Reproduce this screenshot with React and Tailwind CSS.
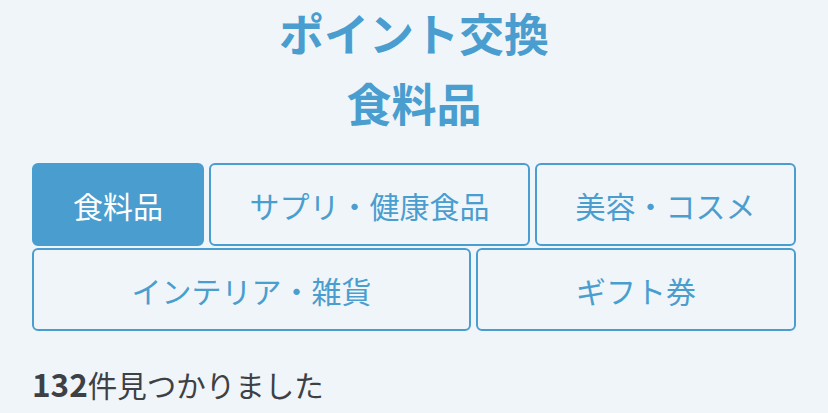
const categories = [
  [
    { label: "食料品", width: "w-[172px]", active: true },
    { label: "サプリ・健康食品", width: "w-[321px]" },
    { label: "美容・コスメ", width: "w-[261px]" },
  ],
  [
    { label: "インテリア・雑貨", width: "w-[439px]" },
    { label: "ギフト券", width: "w-[320px]" },
  ],
];

export default function App() {
  return (
    <div
      className="min-h-[413px] bg-[#f0f5f9] px-8 overflow-hidden"
      style={{ fontFamily: '"Noto Sans CJK JP", "Noto Sans", sans-serif' }}
    >
      {/* タイトル */}
      <h1 className="text-center text-[45px] font-bold text-[#4a9ecf]">
        <span className="block leading-[66px]">ポイント交換</span>
        <span className="block leading-[74px]">食料品</span>
      </h1>

      {/* カテゴリ */}
      <div className="mt-[23px] flex flex-col gap-[2px]">
        {categories.map((row, i) => (
          <div key={i} className="flex gap-[5px]">
            {row.map((c) => (
              <button
                key={c.label}
                className={`${c.width} h-[83px] rounded-md border-2 border-[#4a9ecf] text-[30px] leading-none ${
                  c.active ? "bg-[#4a9ecf] text-white" : "text-[#4a9ecf]"
                }`}
              >
                {c.label}
              </button>
            ))}
          </div>
        ))}
      </div>

      {/* 件数 */}
      <p className="mt-[32px] text-[29.5px] leading-[40px] text-[#3d4145]">
        <span className="font-bold text-[31.5px]">132</span>件見つかりました
      </p>
    </div>
  );
}
